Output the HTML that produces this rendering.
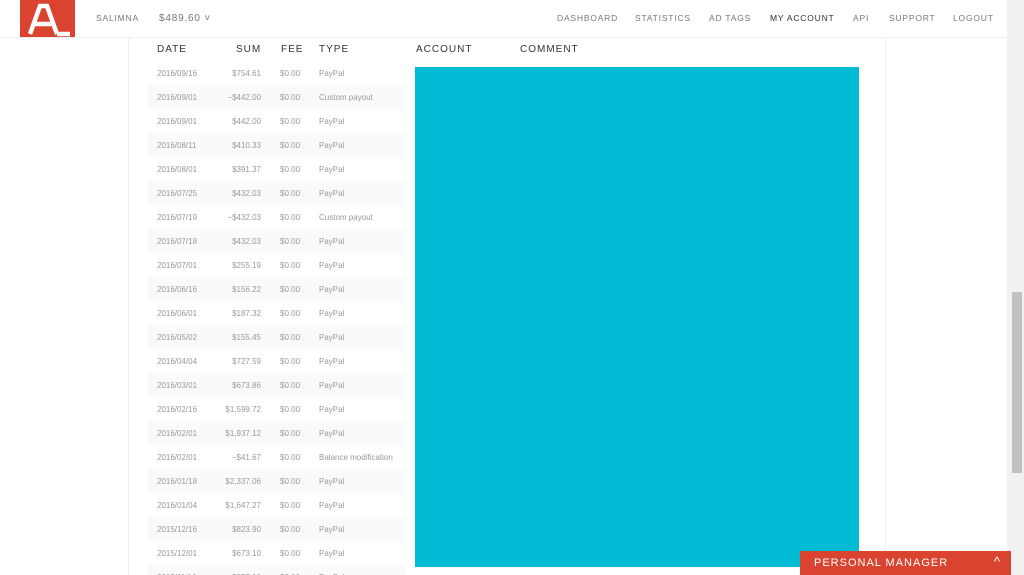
<!DOCTYPE html><html style="overflow:hidden"><head><style>
html,body{margin:0;width:1024px;height:575px;overflow:hidden}
body{background:#fff;font-family:"Liberation Sans",sans-serif;position:relative}
.hdr{position:absolute;left:0;top:0;width:1007px;height:37px;border-bottom:1px solid #eee;background:#fff}
.logo{position:absolute;left:20px;top:0;width:55px;height:37px;background:#d9432f}
.nav{position:absolute;top:13px;font-size:8.5px;letter-spacing:0.8px;color:#777}
.panel{position:absolute;left:128px;top:38px;width:756px;height:537px;border-left:1px solid #eee;border-right:1px solid #eee}
.th{position:absolute;top:44px;font-size:10px;letter-spacing:1px;color:#333}
.row{position:absolute;left:148px;width:257px;height:24px;font-size:8px;color:#999}
.row.s{background:#fafafa}
.row span{position:absolute;top:8px}
.cy{position:absolute;left:415px;top:67px;width:444px;height:500px;background:#02bbd4}
.sb{position:absolute;left:1007px;top:0;width:17px;height:575px;background:#f1f1f1}
.pm{position:absolute;left:800px;top:551px;width:211px;height:24px;background:#d9432f;color:#fff;font-size:11px;letter-spacing:1px}
</style></head><body>
<div class="hdr">
<div class="logo"><svg width="55" height="37"><path d="M10 34 L20 6 L27 6 L37 34 M15 24 L32 24 M37 34 L50 34" stroke="#fff" stroke-width="4.5" fill="none"/></svg></div>
<div class="nav" style="left:96px">SALIMNA</div>
<div class="nav" style="left:159px;font-size:10px">$489.60 ˅</div>
<div class="nav" style="left:557px">DASHBOARD</div>
<div class="nav" style="left:635px">STATISTICS</div>
<div class="nav" style="left:709px">AD TAGS</div>
<div class="nav" style="left:770px;color:#333">MY ACCOUNT</div>
<div class="nav" style="left:853px">API</div>
<div class="nav" style="left:889px">SUPPORT</div>
<div class="nav" style="left:953px">LOGOUT</div>
</div>
<div class="panel"></div>
<div class="th" style="left:157px">DATE</div><div class="th" style="left:236px">SUM</div><div class="th" style="left:281px">FEE</div><div class="th" style="left:319px">TYPE</div><div class="th" style="left:416px">ACCOUNT</div><div class="th" style="left:520px">COMMENT</div>
<div id="rows"></div>
<div class="cy"></div>
<div class="sb"><div style="position:absolute;left:5px;top:292px;width:10px;height:181px;background:#c1c1c1"></div></div>
<div class="pm"><span style="position:absolute;left:14px;top:6px">PERSONAL MANAGER</span><span style="position:absolute;right:10px;top:3px;font-size:13px">^</span></div>
<script>
var d=[["2016/09/16","$754.61","PayPal"],["2016/09/01","−$442.00","Custom payout"],["2016/09/01","$442.00","PayPal"],["2016/08/11","$410.33","PayPal"],["2016/08/01","$391.37","PayPal"],["2016/07/25","$432.03","PayPal"],["2016/07/19","−$432.03","Custom payout"],["2016/07/18","$432.03","PayPal"],["2016/07/01","$255.19","PayPal"],["2016/06/16","$156.22","PayPal"],["2016/06/01","$187.32","PayPal"],["2016/05/02","$155.45","PayPal"],["2016/04/04","$727.59","PayPal"],["2016/03/01","$673.86","PayPal"],["2016/02/16","$1,599.72","PayPal"],["2016/02/01","$1,937.12","PayPal"],["2016/02/01","−$41.67","Balance modification"],["2016/01/18","$2,337.06","PayPal"],["2016/01/04","$1,647.27","PayPal"],["2015/12/16","$823.90","PayPal"],["2015/12/01","$673.10","PayPal"],["2015/11/16","$657.10","PayPal"]];
var h="";d.forEach(function(r,i){h+='<div class="row'+(i%2?' s':'')+'" style="top:'+(61+i*24)+'px"><span style="left:9px">'+r[0]+'</span><span style="right:144px">'+r[1]+'</span><span style="left:132px">$0.00</span><span style="left:171px">'+r[2]+'</span></div>'});
document.getElementById("rows").innerHTML=h;
</script>
</body></html>
